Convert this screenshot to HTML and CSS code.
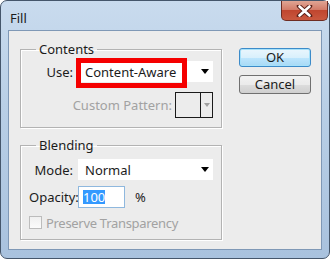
FILE: index.html
```html
<!DOCTYPE html>
<html lang="en">

<head>
    <meta charset="UTF-8">
    <title>Fill</title>
    <link rel="stylesheet" href="styles.css">
</head>

<body>

    <div class="window">
        <div class="titlebar">
            <span class="title">Fill</span>
            <div class="close">
                <svg width="17" height="12" viewBox="0 0 17 12">
                    <path d="M3 1 L14 11 M14 1 L3 11" stroke="#5a2018" stroke-width="4.5" stroke-linecap="round" />
                    <path d="M3.5 1.5 L13.5 10.5 M13.5 1.5 L3.5 10.5" stroke="#fff" stroke-width="2.6" stroke-linecap="round" />
                </svg>
            </div>
        </div>

        <div class="client">
            <div class="groups">

                <fieldset class="group contents">
                    <legend>Contents</legend>
                    <div class="row use-row">
                        <span class="lbl">Use:</span>
                        <div class="select">
                            <span>Content-Aware</span>
                            <span class="arrow"></span>
                            <div class="mark"></div>
                        </div>
                    </div>
                    <div class="row pattern-row">
                        <span class="disabled">Custom Pattern:</span>
                        <div class="swatch">
                            <div class="swatch-box"></div>
                            <div class="swatch-btn"><span class="arrow grey"></span></div>
                        </div>
                    </div>
                </fieldset>

                <fieldset class="group blending">
                    <legend>Blending</legend>
                    <div class="row mode-row">
                        <span class="lbl">Mode:</span>
                        <div class="select">
                            <span>Normal</span>
                            <span class="arrow"></span>
                        </div>
                    </div>
                    <div class="row opacity-row">
                        <span class="lbl">Opacity:</span>
                        <div class="input"><span class="sel">100</span></div>
                        <span class="pct">%</span>
                    </div>
                    <div class="row check-row">
                        <span class="checkbox"></span>
                        <span class="disabled tight">Preserve Transparency</span>
                    </div>
                </fieldset>

            </div>

            <div class="buttons">
                <div class="btn default">OK</div>
                <div class="btn">Cancel</div>
            </div>
        </div>
    </div>

</body></html>
```

FILE: styles.css
```css
body {
    margin: 0;
    width: 330px;
    height: 259px;
    overflow: hidden;
    font-family: "Noto Sans", "Open Sans", sans-serif;
    font-size: 13px;
    color: #1b1b1b;
}

.window {
    box-sizing: border-box;
    width: 330px;
    height: 259px;
    border: 1px solid #45566b;
    border-radius: 7px 7px 7px 7px;
    background: linear-gradient(#c9dbee, #b9cfe6 40%, #a9c2de);
    padding: 0 7px 8px 7px;
    display: flex;
    flex-direction: column;
}

.titlebar {
    height: 29px;
    display: flex;
    justify-content: space-between;
    align-items: flex-start;
    margin: 0 -6px 0 0;
}

.title {
    margin-top: 8px;
    margin-left: 2px;
    font-size: 13px;
}

.close {
    width: 47px;
    height: 20px;
    box-sizing: border-box;
    border: 1px solid #6e2c22;
    border-top: none;
    border-radius: 0 0 5px 5px;
    background: linear-gradient(#e0a594, #d37c69 45%, #c0462f 50%, #c9583f);
    display: flex;
    align-items: center;
    justify-content: center;
}

.client {
    flex: 1;
    display: flex;
    background: #ececec;
    border: 1px solid #7f98b6;
    padding: 9px 0 0 11px;
    gap: 17px;
}

.groups {
    width: 202px;
    display: flex;
    flex-direction: column;
}

.group {
    margin: 0;
    border: 1px solid #b3b3b3;
    box-shadow: inset 1px 1px 0 #fff, 1px 1px 0 #fff;
    padding: 0 8px 9px 8px;
    min-width: 0;
}

.group legend {
    padding: 0 3px;
    margin-left: 7px;
    line-height: 18px;
}

.blending {
    margin-top: 8px;
    padding-bottom: 10px;
}

.row {
    display: flex;
    align-items: center;
}

.lbl {
    width: 44px;
    text-align: right;
    margin-right: 5px;
}

.disabled {
    color: #a2a2a2;
}

.tight {
    letter-spacing: -0.3px;
}

.use-row {
    margin-top: 3px;
}

.select {
    position: relative;
    flex: 1;
    height: 21px;
    box-sizing: border-box;
    background: #fff;
    display: flex;
    align-items: center;
    justify-content: space-between;
    padding: 0 4px 0 7px;
}

.arrow {
    width: 0;
    height: 0;
    border-left: 4px solid transparent;
    border-right: 4px solid transparent;
    border-top: 5px solid #000;
}

.arrow.grey {
    border-left-width: 3px;
    border-right-width: 3px;
    border-top: 4px solid #a0a0a0;
}

.mark {
    position: absolute;
    left: -2px;
    top: -3px;
    width: 111px;
    height: 30px;
    box-sizing: border-box;
    border: 5px solid #f50000;
}

.pattern-row {
    margin-top: 10px;
    justify-content: flex-end;
}

.swatch {
    display: flex;
    height: 26px;
    width: 38px;
    margin-left: 3px;
    box-sizing: border-box;
    border: 1px solid #1a1a1a;
}

.swatch-box {
    flex: 1;
    border-right: 1px solid #1a1a1a;
}

.swatch-btn {
    width: 11px;
    display: flex;
    align-items: center;
    justify-content: center;
}

.mode-row {
    margin-top: 5px;
}

.opacity-row {
    margin-top: 6px;
}

.input {
    width: 47px;
    height: 22px;
    box-sizing: border-box;
    border: 1px solid #8fb8de;
    background: #fff;
    display: flex;
    align-items: center;
    padding-left: 4px;
}

.sel {
    background: #3399ff;
    color: #fff;
    line-height: 14px;
}

.pct {
    margin-left: 10px;
}

.check-row {
    margin-top: 8px;
    height: 13px;
}

.checkbox {
    width: 13px;
    height: 13px;
    box-sizing: border-box;
    border: 1px solid #bcbcbc;
    background: linear-gradient(#f0f0f0, #fbfbfb);
    margin-right: 4px;
}

.buttons {
    padding-top: 8px;
    display: flex;
    flex-direction: column;
    gap: 8px;
}

.btn {
    width: 72px;
    height: 19px;
    box-sizing: border-box;
    border: 1px solid #707070;
    border-radius: 3px;
    background: linear-gradient(#f2f2f2, #ebebeb 50%, #dddddd 51%, #cfcfcf);
    text-align: center;
    line-height: 17px;
}

.btn.default {
    border-color: #3c8bc9;
    background: linear-gradient(#eaf6fd, #d9f0fc 50%, #bee6fd 51%, #a7d9f5);
    box-shadow: inset 0 0 0 1px #a6e1fa;
}
```
